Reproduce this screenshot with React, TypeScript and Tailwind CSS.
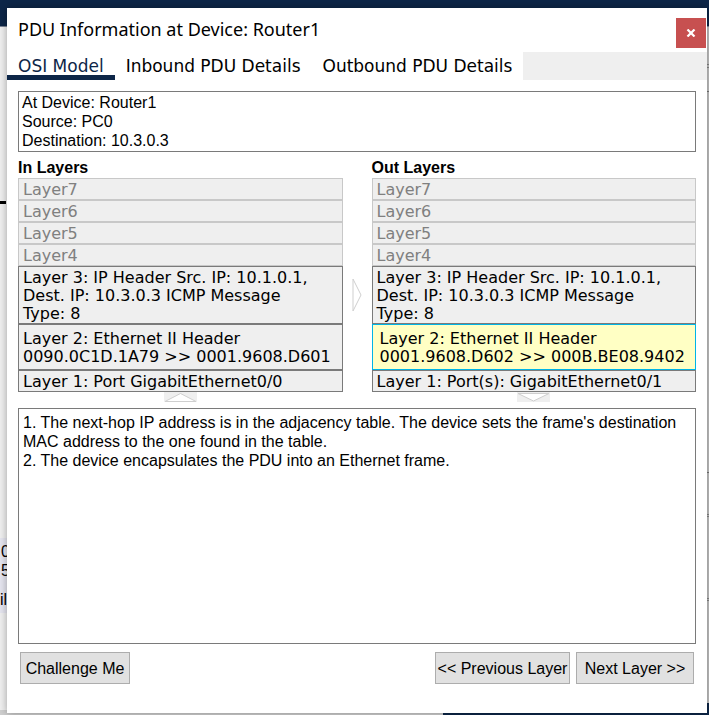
import React, { useState } from "react";

type Layer = { text: string[]; kind: "disabled" | "normal" | "tall" };

const ARIAL = "font-['Liberation_Sans',Arial,sans-serif]";
const VERDANA = "font-['DejaVu_Sans',Verdana,sans-serif]";

const emptyLayers: Layer[] = ["Layer7", "Layer6", "Layer5", "Layer4"].map((name) => ({
  text: [name],
  kind: "disabled",
}));

const ipHeader: Layer = {
  text: ["Layer 3: IP Header Src. IP: 10.1.0.1,", "Dest. IP: 10.3.0.3 ICMP Message", "Type: 8"],
  kind: "normal",
};

const inLayers: Layer[] = [
  ...emptyLayers,
  ipHeader,
  { text: ["Layer 2: Ethernet II Header", "0090.0C1D.1A79 >> 0001.9608.D601"], kind: "tall" },
  { text: ["Layer 1: Port GigabitEthernet0/0"], kind: "normal" },
];

const outLayers: Layer[] = [
  ...emptyLayers,
  ipHeader,
  { text: ["Layer 2: Ethernet II Header", "0001.9608.D602 >> 000B.BE08.9402"], kind: "tall" },
  { text: ["Layer 1: Port(s): GigabitEthernet0/1"], kind: "normal" },
];

const tabs = ["OSI Model", "Inbound PDU Details", "Outbound PDU Details"];

function LayerRow({ layer, selected }: { layer: Layer; selected: boolean }) {
  const tone = selected
    ? "border-[#00b4e6] bg-[#ffffc4] pl-[7px] text-black"
    : layer.kind === "disabled"
      ? "border-[#c8c8c8] bg-[#efefef] pl-1 text-[#808080]"
      : "border-[#7a7a7a] bg-[#efefef] pl-1 text-black";
  const pad = layer.kind === "tall" ? "pt-[5px] pb-[3px]" : "pt-[2px]";
  return (
    <button
      type="button"
      disabled={layer.kind === "disabled"}
      className={`block w-full border text-left text-[16px] leading-[18px] whitespace-nowrap ${VERDANA} ${tone} ${pad}`}
    >
      {layer.text.map((line) => (
        <span key={line} className="block">
          {line}
        </span>
      ))}
    </button>
  );
}

function LayerColumn({
  title,
  layers,
  selected,
  direction,
}: {
  title: string;
  layers: Layer[];
  selected?: number;
  direction: "up" | "down";
}) {
  return (
    <section className="min-w-0 flex-1">
      <h2 className="h-[26px] pt-[6px] text-[16px] leading-[19px] font-bold">{title}</h2>
      {layers.map((layer, i) => (
        <LayerRow key={i} layer={layer} selected={i === selected} />
      ))}
      <svg className="mx-auto block" width="33" height="10" viewBox="0 0 33 10">
        <rect width="33" height="10" fill="#efefef" />
        {direction === "up" ? (
          <path d="M1 9.5 L16.5 1.5 L32 9.5 Z" fill="#fff" stroke="#cfcfcf" />
        ) : (
          <path d="M1 1.5 L16.5 9 L32 1.5 Z" fill="#fff" stroke="#cfcfcf" />
        )}
      </svg>
    </section>
  );
}

function Backdrop() {
  return (
    <div
      aria-hidden="true"
      className={`absolute inset-0 overflow-hidden bg-[#f0f0f0] text-[16px] leading-[19px] ${ARIAL}`}
    >
      <div className="h-[27px] border-b border-[#7a8494] bg-[#0d2648]" />
      <div className="absolute top-[201px] left-0 h-[3px] w-[6px] bg-black" />
      <div className="absolute top-[538px] left-0 bg-[#e6e6f0] pb-[4px]">
        <div className="pt-1 pl-px">0</div>
        <div className="pl-px">5</div>
        <div className="pt-[10px]">il</div>
      </div>
      <div className="absolute top-[27px] right-0 bottom-0 w-[3px] bg-[#c4c4c4]" />
      <div className="absolute top-[64px] right-0 h-[4px] w-[2px] border-y border-[#888]" />
      <div className="absolute top-[91px] right-0 h-px w-[2px] bg-[#777]" />
      <div className="absolute top-[472px] right-0 h-px w-[2px] bg-[#777]" />
      <div className="absolute top-[514px] right-0 h-[3px] w-[2px] border-y border-[#888]" />
      <div className="absolute top-[598px] right-0 h-[3px] w-[2px] border-y border-[#888]" />
      <div className="absolute right-0 bottom-0 left-[443px] h-[12px] bg-[#0d2648]" />
      <div className="absolute bottom-0 left-0 h-[5px] w-[443px] bg-[#cfcfcf]" />
    </div>
  );
}

const actionButton =
  "h-8 border border-[#adadad] bg-[#e1e1e1] text-center text-[16px] leading-[19px] whitespace-nowrap";

export default function App() {
  const [active, setActive] = useState(0);
  return (
    <main className={`relative flex min-h-screen flex-col pt-2 pr-[2px] pb-[2px] pl-[7px] ${ARIAL}`}>
      <Backdrop />
      <div
        role="dialog"
        aria-labelledby="dialog-title"
        className="relative flex flex-1 flex-col bg-white text-black shadow-[0_0_8px_rgba(0,0,0,0.35)]"
      >
        <header className="flex h-11 items-start justify-between pr-px pl-[11px]">
          <h1
            id="dialog-title"
            className="pt-2 font-['Noto_Sans','Segoe_UI',sans-serif] text-[18px] leading-[26px]"
          >
            PDU Information at Device: Router1
          </h1>
          <button
            type="button"
            aria-label="Close"
            className="mt-[10px] flex size-[30px] items-center justify-center bg-[#c75050]"
          >
            <svg width="10" height="8" viewBox="0 0 10 8">
              <path d="M1.5 0.5 L8.5 7.5 M8.5 0.5 L1.5 7.5" stroke="#fff" strokeWidth="2.2" />
            </svg>
          </button>
        </header>

        <nav role="tablist" className={`flex h-7 bg-[#efefef] text-[17px] leading-[18px] ${VERDANA}`}>
          {tabs.map((tab, i) => (
            <button
              key={tab}
              type="button"
              role="tab"
              aria-selected={i === active}
              onClick={() => setActive(i)}
              className={`border-b-[5px] bg-white px-[11px] pt-[5px] whitespace-nowrap ${
                i === active ? "border-[#0d2648] text-[#0d2648]" : "border-white"
              }`}
            >
              {tab}
            </button>
          ))}
        </nav>

        <div className="flex flex-1 flex-col px-[11px] pt-[11px]">
          <div className="border border-[#7a7a7a] px-[3px] py-px text-[16px] leading-[19px]">
            <p>At Device: Router1</p>
            <p>Source: PC0</p>
            <p>Destination: 10.3.0.3</p>
          </div>

          <div className="flex">
            <LayerColumn title="In Layers" layers={inLayers} direction="up" />
            <div className="flex w-[29px] shrink-0 justify-center pt-[126px]">
              <svg width="10" height="34" viewBox="0 0 10 34">
                <path d="M1 1 L9 17 L1 33 Z" fill="#fff" stroke="#cfcfcf" />
              </svg>
            </div>
            <LayerColumn title="Out Layers" layers={outLayers} selected={5} direction="down" />
          </div>

          <div className="mt-[6px] flex-1 border border-[#7a7a7a] p-1 text-[16px] leading-[19px]">
            <p>
              1. The next-hop IP address is in the adjacency table. The device sets the frame's destination
              MAC address to the one found in the table.
            </p>
            <p>2. The device encapsulates the PDU into an Ethernet frame.</p>
          </div>

          <footer className="flex gap-[6px] px-[2px] pt-2 pb-[29px]">
            <button type="button" className={`${actionButton} mr-auto w-[110px]`}>
              Challenge Me
            </button>
            <button type="button" className={`${actionButton} w-[135px]`}>
              &lt;&lt; Previous Layer
            </button>
            <button type="button" className={`${actionButton} w-[118px]`}>
              Next Layer &gt;&gt;
            </button>
          </footer>
        </div>
      </div>
    </main>
  );
}
